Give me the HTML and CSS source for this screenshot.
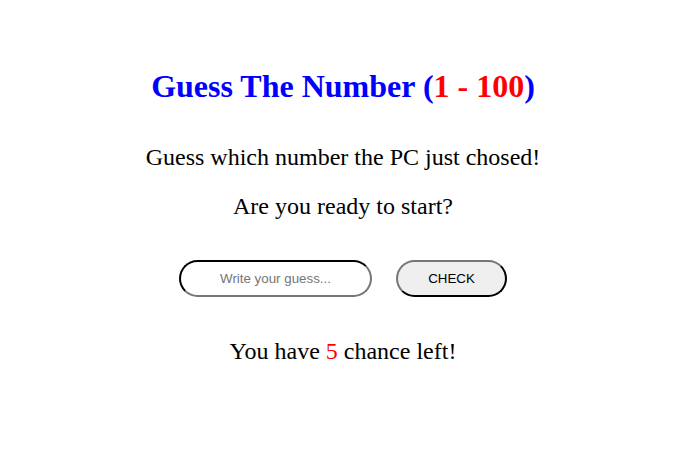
FILE: index.html
```html
<!DOCTYPE html>
<html>
<head>
<meta charset="utf-8">
<link rel="stylesheet" href="styles.css">
</head>
<body>
<main class="game">
  <h1 class="title">Guess The Number (<span class="red">1 - 100</span>)</h1>
  <p class="text">Guess which number the PC just chosed!</p>
  <p class="text">Are you ready to start?</p>
  <div class="controls">
    <input class="guess" type="text" placeholder="Write your guess...">
    <button class="check">CHECK</button>
  </div>
  <p class="text chances">You have <span class="red">5</span> chance left!</p>
</main>
</body>
</html>
```
FILE: styles.css
```css
html, body {
  margin: 0;
  background: #fff;
}
body {
  font-family: "Liberation Serif", "Times New Roman", serif;
}
.game {
  display: flex;
  flex-direction: column;
  align-items: center;
  padding-top: 68px;
  padding-left: 3px;
}
.title {
  margin: 0;
  font-size: 32px;
  font-weight: bold;
  color: #0000ff;
  line-height: 37px;
}
.red {
  color: #ff0000;
}
.text {
  margin: 0;
  font-size: 24px;
  line-height: 28px;
  color: #000;
}
.title + .text {
  margin-top: 38px;
}
.text + .text {
  margin-top: 21px;
}
.controls {
  display: flex;
  gap: 24px;
  margin-top: 40px;
}
.guess {
  box-sizing: border-box;
  width: 193px;
  height: 37px;
  border: 2px inset #767676;
  border-top-color: #1a1a2a;
  border-left-color: #1a1a2a;
  border-radius: 20px;
  text-align: center;
  font-family: "Liberation Sans", Arial, sans-serif;
  font-size: 13.33px;
  outline: none;
  background: #fff;
}
.guess::placeholder {
  color: #757575;
}
.check {
  box-sizing: border-box;
  width: 111px;
  height: 37px;
  border: 2px outset #767676;
  border-right-color: #1a1a2a;
  border-bottom-color: #1a1a2a;
  border-radius: 20px;
  background: #efefef;
  font-family: "Liberation Sans", Arial, sans-serif;
  font-size: 13.33px;
  color: #000;
}
.controls + .chances {
  margin-top: 40px;
}
```
